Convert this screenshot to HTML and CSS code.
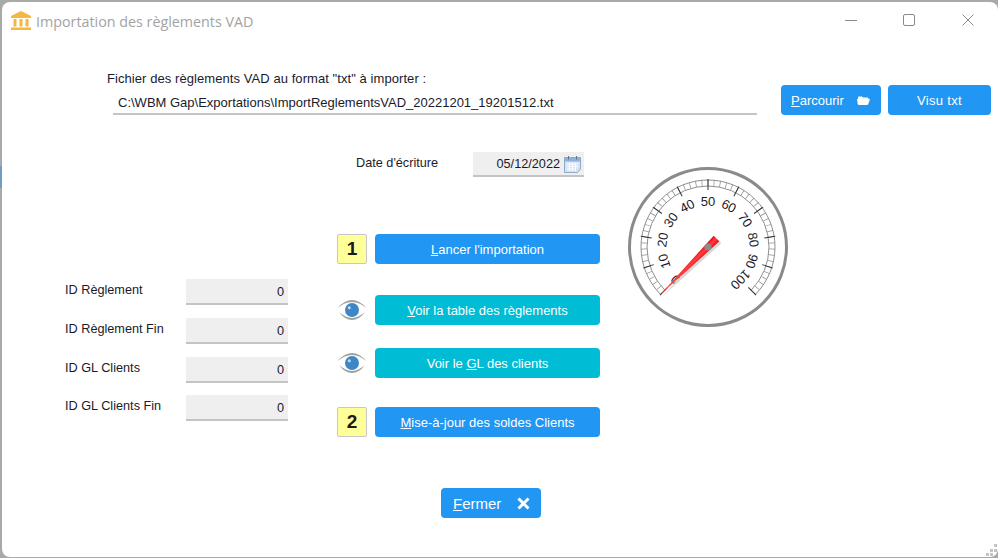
FILE: index.html
```html
<!DOCTYPE html>
<html lang="fr">
<head>
<meta charset="utf-8">
<title>Importation des règlements VAD</title>
<link rel="stylesheet" href="styles.css">
</head>
<body>
<div class="window">
  <header class="titlebar">
    <svg class="app-icon" width="20" height="20" viewBox="0 0 20 20">
      <path d="M10 0 L20 5 V7 H0 V5 Z" fill="#f4b83f"/>
      <rect x="2.500" y="8" width="3" height="7.500" fill="#f4b83f"/>
      <rect x="8.500" y="8" width="3" height="7.500" fill="#f4b83f"/>
      <rect x="14.500" y="8" width="3" height="7.500" fill="#f4b83f"/>
      <rect x="0" y="16.500" width="20" height="2.500" fill="#f4b83f"/>
    </svg>
    <span class="title">Importation des règlements VAD</span>
    <div class="controls">
      <svg width="12" height="12" viewBox="0 0 12 12"><path d="M0 6.500H12" stroke="#8a8a8a" fill="none"/></svg>
      <svg width="12" height="12" viewBox="0 0 12 12"><rect x=".5" y=".5" width="11" height="11" rx="1.500" stroke="#8a8a8a" fill="none"/></svg>
      <svg width="12" height="12" viewBox="0 0 12 12"><path d="M.5 .5L11.500 11.500M11.500 .5L.5 11.500" stroke="#8a8a8a" fill="none"/></svg>
    </div>
  </header>

  <section class="file-row">
    <div class="file-block">
      <div class="file-label">Fichier des règlements VAD au format "txt" à importer :</div>
      <div class="file-input">C:\WBM Gap\Exportations\ImportReglementsVAD_20221201_19201512.txt</div>
    </div>
    <button class="btn blue browse"><span><u>P</u>arcourir</span>
      <svg width="13" height="9" viewBox="0 0 13 9"><path d="M1 1.500Q1 .5 2 .5H5L6 1.500H10.500Q11.500 1.500 11.500 2.500V3H13L11.300 8Q11 9 10 9H2Q1 9 .7 8L0 3H1Z" fill="#fff"/></svg>
    </button>
    <button class="btn blue visu">Visu txt</button>
  </section>

  <main class="main">
    <div class="ids">
      <div class="id-row"><span>ID Règlement</span><div class="num">0</div></div>
      <div class="id-row r2"><span>ID Règlement Fin</span><div class="num">0</div></div>
      <div class="id-row r3"><span>ID GL Clients</span><div class="num">0</div></div>
      <div class="id-row r4"><span>ID GL Clients Fin</span><div class="num">0</div></div>
    </div>

    <div class="center">
      <div class="date-row">
        <span class="date-label">Date d'écriture</span>
        <div class="date-input">05/12/2022
          <svg width="17" height="18" viewBox="0 0 17 18">
            <path d="M.5 2.500H16.500V14L13.500 17.500H.5Z" fill="#d4e3f5" stroke="#8fa9c8"/>
            <rect x="1" y="3" width="15" height="3.500" fill="#8fb2dc"/>
            <path d="M3 9H14M3 11.500H14M3 14H12M5.500 7.500V16M8.500 7.500V16M11.500 7.500V16" stroke="#fff"/>
            <path d="M4.500 1V4.500M12.500 1V4.500" stroke="#5f7288"/>
          </svg>
        </div>
      </div>
      <div class="step s1"><div class="badge">1</div><button class="btn blue wide"><span><u>L</u>ancer l'importation</span></button></div>
      <div class="step s2">
        <svg class="eye" width="30" height="24" viewBox="0 0 30 24"><path d="M.5 10Q15 -6 29.500 10Q15 -2 .5 10Z" fill="#a0a0a0"/><path d="M2 14Q8 22 15 22Q22 22 28 14Q22 19.500 15 20Q8 19.500 2 14Z" fill="#a0a0a0"/><circle cx="15" cy="12" r="7" fill="#3f86c6"/><circle cx="12.300" cy="9.800" r="1.500" fill="#c9dbea"/></svg>
        <button class="btn teal wide"><span><u>V</u>oir la table des règlements</span></button>
      </div>
      <div class="step s3">
        <svg class="eye" width="30" height="24" viewBox="0 0 30 24"><path d="M.5 10Q15 -6 29.500 10Q15 -2 .5 10Z" fill="#a0a0a0"/><path d="M2 14Q8 22 15 22Q22 22 28 14Q22 19.500 15 20Q8 19.500 2 14Z" fill="#a0a0a0"/><circle cx="15" cy="12" r="7" fill="#3f86c6"/><circle cx="12.300" cy="9.800" r="1.500" fill="#c9dbea"/></svg>
        <button class="btn teal wide"><span>Voir le <u>G</u>L des clients</span></button>
      </div>
      <div class="step s4"><div class="badge">2</div><button class="btn blue wide"><span><u>M</u>ise-à-jour des soldes Clients</span></button></div>
      <button class="btn blue close"><span><u>F</u>ermer</span>
        <svg width="13" height="13" viewBox="0 0 13 13"><path d="M1.500 1.500L11.500 11.500M11.500 1.500L1.500 11.500" stroke="#fff" stroke-width="3" fill="none"/></svg>
      </button>
    </div>

    <svg class="gauge" width="160" height="160" viewBox="-80 -80 160 160">
      <defs>
        <linearGradient id="needle-fill" x1="0" x2="1" y1="0" y2="0">
          <stop offset="0" stop-color="#f00010"/><stop offset=".5" stop-color="#ff4040"/><stop offset="1" stop-color="#f80010"/>
        </linearGradient>
      </defs>
      <circle r="78.500" fill="#fff" stroke="#8a8a8a" stroke-width="3"/>
      <g fill="none" stroke="#8f8f8f" stroke-width="1">
        <path d="M-47.380 47.380A67 67 0 1 1 47.380 47.380"/>
        <path d="M-43.130 43.130A61 61 0 1 1 43.130 43.130"/>
        <path class="minor" d="M-45.250 45.250A64 64 0 1 1 45.250 45.250" pathLength="50"/>
      </g>
      <g stroke="#333" stroke-width="1">
        <line y1="-57" y2="-68" transform="rotate(-135)"/>
        <line y1="-57" y2="-68" transform="rotate(-108)"/>
        <line y1="-57" y2="-68" transform="rotate(-81)"/>
        <line y1="-57" y2="-68" transform="rotate(-54)"/>
        <line y1="-57" y2="-68" transform="rotate(-27)"/>
        <line y1="-57" y2="-68"/>
        <line y1="-57" y2="-68" transform="rotate(27)"/>
        <line y1="-57" y2="-68" transform="rotate(54)"/>
        <line y1="-57" y2="-68" transform="rotate(81)"/>
        <line y1="-57" y2="-68" transform="rotate(108)"/>
        <line y1="-57" y2="-68" transform="rotate(135)"/>
      </g>
      <g class="labels">
        <text transform="rotate(-135) translate(0 -41.500)">0</text>
        <text transform="rotate(-108) translate(0 -41.500)">10</text>
        <text transform="rotate(-81) translate(0 -41.500)">20</text>
        <text transform="rotate(-54) translate(0 -41.500)">30</text>
        <text transform="rotate(-27) translate(0 -41.500)">40</text>
        <text transform="translate(0 -41.500)">50</text>
        <text transform="rotate(27) translate(0 -41.500)">60</text>
        <text transform="rotate(54) translate(0 -41.500)">70</text>
        <text transform="rotate(81) translate(0 -41.500)">80</text>
        <text transform="rotate(108) translate(0 -41.500)">90</text>
        <text transform="rotate(135) translate(0 -41.500)">100</text>
      </g>
      <polygon points="0,-68 4,12 -4,12" transform="translate(2 2) rotate(-135)" fill="#d8d8d8"/>
      <polygon points="0,-68 4,12 -4,12" transform="rotate(-135)" fill="url(#needle-fill)"/>
      <circle r="3.600" fill="#8c8c8c"/>
    </svg>
  </main>

  <svg class="grip" width="11" height="12" viewBox="0 0 11 12"><path d="M8 0h3v3H8zM4 5h3v3H4zM8 5h3v3H8zM0 9h3v3H0zM4 9h3v3H4z" fill="#c4c4c4"/></svg>
</div>
</body>
</html>
```
FILE: styles.css
```css
* { box-sizing: border-box; }
html, body { height: 100%; }
body {
  margin: 0;
  overflow: hidden;
  background: linear-gradient(to bottom, #a9a9a9 0 166px, #6f9cc0 166px 188px, #a9a9a9 188px 100%);
  font-family: "Liberation Sans", Arial, sans-serif;
  font-size: 13px;
  color: #1a1a2a;
}
.window {
  position: relative;
  width: 996px;
  height: 555px;
  margin: 2px 0 0 2px;
  background: #fff;
  border-radius: 8px;
}
.titlebar {
  display: flex;
  align-items: center;
  height: 38px;
  padding-left: 9px;
}
.app-icon { margin-right: 5px; }
.title {
  font-family: "Open Sans", sans-serif;
  font-size: 14.300px;
  color: #a3a3a3;
}
.controls {
  display: flex;
  gap: 46px;
  margin-left: auto;
  margin-right: 24px;
  margin-bottom: 2px;
}
.controls svg:last-child { margin-left: 1px; }
.file-row {
  display: flex;
  align-items: flex-start;
  height: 112px;
  padding-left: 105px;
}
.file-block { width: 650px; margin-top: 32px; }
.file-label { height: 19px; line-height: 14px; letter-spacing: .07px; }
.file-input {
  width: 644px;
  height: 24px;
  margin-left: 6px;
  padding-left: 5px;
  line-height: 24px;
  border-bottom: 2px solid #c4c4c4;
}
.btn {
  border: 0;
  border-radius: 4px;
  padding: 0;
  color: #fff;
  font: inherit;
  display: flex;
  align-items: center;
  justify-content: center;
}
.blue { background: #2196f3; }
.teal { background: #00bcd4; }
.browse {
  width: 100px;
  height: 30px;
  margin: 45px 0 0 24px;
  justify-content: space-between;
  padding: 0 11px 0 10px;
}
.visu { width: 103px; height: 30px; margin: 45px 0 0 7px; letter-spacing: .3px; }
.main { display: flex; align-items: flex-start; padding-left: 63px; }
.ids { width: 223px; margin-top: 127px; font-size: 12.700px; }
.id-row { display: flex; justify-content: space-between; height: 26px; }
.id-row span { line-height: 23px; }
.r2 { margin-top: 13px; }
.r3 { margin-top: 13px; }
.r4 { margin-top: 12px; }
.num {
  width: 102px;
  height: 26px;
  padding: 5px 4px 0 0;
  text-align: right;
  line-height: 16px;
  background: #efefef;
  border-bottom: 2px solid #c4c4c4;
}
.center { width: 263px; margin-left: 49px; }
.date-row { display: flex; height: 25px; padding-left: 19px; }
.date-label { width: 117px; line-height: 22px; font-size: 12.700px; }
.date-input {
  display: flex;
  align-items: center;
  justify-content: flex-end;
  gap: 4px;
  width: 111px;
  height: 25px;
  padding-right: 3px;
  font-size: 12.700px;
  background: #efefef;
  border-bottom: 2px solid #c4c4c4;
}
.step { display: flex; align-items: center; gap: 8px; height: 30px; }
.s1 { margin-top: 57px; }
.s2 { margin-top: 31px; }
.s3 { margin-top: 23px; }
.s4 { margin-top: 29px; }
.badge {
  width: 30px;
  height: 30px;
  background: #ffff99;
  border: 1px solid #c8c8c8;
  border-radius: 2px;
  text-align: center;
  font-weight: bold;
  font-size: 19px;
  line-height: 28px;
  color: #1a1a1a;
}
.wide { width: 225px; height: 30px; }
.eye { flex: none; }
.close {
  width: 100px;
  height: 30px;
  margin: 51px 0 0 104px;
  justify-content: space-between;
  padding: 0 11px 0 12px;
  font-size: 15px;
}
.gauge { margin-left: 28px; margin-top: 15px; flex: none; }
.minor { stroke-width: 6; stroke-dasharray: .12 .88; stroke-dashoffset: .06; }
.labels text {
  font-family: "Liberation Sans", Arial, sans-serif;
  font-size: 13px;
  fill: #1a1a2a;
  text-anchor: middle;
}
.grip { position: absolute; right: 1px; bottom: 1px; }
```
